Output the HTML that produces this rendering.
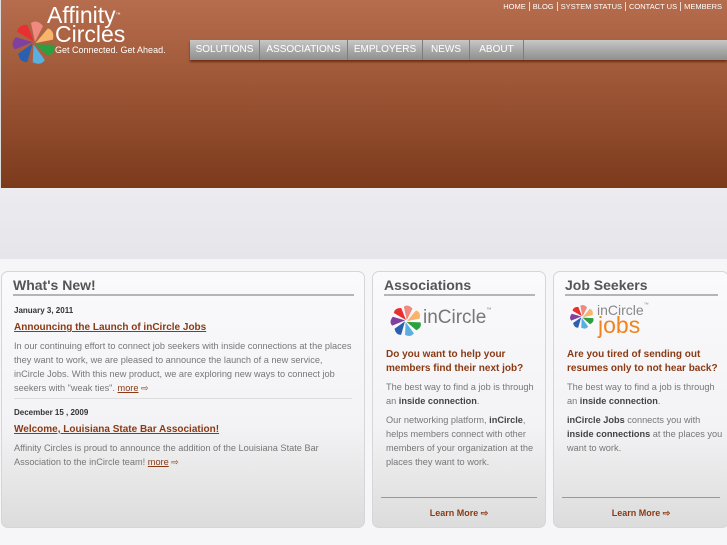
<!DOCTYPE html>
<html><head><style>
*{margin:0;padding:0;box-sizing:border-box}
body{width:727px;height:545px;overflow:hidden;background:#f6f6f8;font-family:"Liberation Sans",sans-serif;position:relative}
#hdr{position:absolute;left:0;top:0;width:727px;height:188px;background:linear-gradient(#b66d4d,#9a5434 50%,#7c3a1c);border-left:1px solid #ddd}
#band{position:absolute;left:0;top:188px;width:727px;height:71px;background:linear-gradient(#ececf0,#e6e6ea)}
.top{position:absolute;right:2px;top:2px;font-size:7.5px;color:#fff}
.top span{padding:0 3px;border-left:1px solid #f0d8cc}
.top span:first-child{border:none}
#nav{position:absolute;left:190px;top:40px;width:537px;height:20px;background:linear-gradient(#c8c8c6,#a9aaa8 50%,#8f908e);box-shadow:0 2px 2px #6e2f15}
#nav div{float:left;height:20px;line-height:20px;color:#fff;font-size:10px;text-align:center;border-right:1px solid #7d7e7c}
.brand{position:absolute;color:#fff}
.panel{position:absolute;top:271px;height:257px;border:1px solid #d6d6da;border-radius:7px;background:linear-gradient(#fafafc 0%,#f3f3f5 60%,#dcdcdc 100%)}
.panel h2{font-size:14px;color:#555;font-weight:bold;border-bottom:2px solid #b5b5b5;padding-bottom:1px;margin:5px 10px 0 11px}
.date{font-size:8px;font-weight:bold;color:#333;margin:10px 0 0 12px}
.ttl{font-size:10px;font-weight:bold;color:#8a3a14;text-decoration:underline;margin:7px 0 0 12px}
.txt{font-size:9.2px;color:#777;line-height:14px;margin:6px 10px 0 12px}
.txt a{color:#8a3a14;text-decoration:underline}
.q{font-size:10px;font-weight:bold;color:#8a3a14;line-height:14px;margin:6px 0 0 13px}
.txt b{color:#444}
.lm{position:absolute;bottom:8px;left:0;right:0;text-align:center;font-size:9px;font-weight:bold;color:#8a3a14}
.hr{position:absolute;left:8px;right:8px;bottom:29px;border-top:1px solid #999}
</style></head><body>
<svg width="0" height="0" style="position:absolute"><defs>
<path id="p" d="M1,-1 L-3,-20 Q3,-24 9,-17 Z"/>
<g id="pw">
<use href="#p" fill="#f08a80" transform="rotate(0)"/>
<use href="#p" fill="#f7b46a" transform="rotate(52)"/>
<use href="#p" fill="#2aa040" transform="rotate(104)"/>
<use href="#p" fill="#5aaee0" transform="rotate(156)"/>
<use href="#p" fill="#2b5fb0" transform="rotate(208)"/>
<use href="#p" fill="#8040a0" transform="rotate(260)"/>
<use href="#p" fill="#e83030" transform="rotate(312)"/>
</g></defs></svg>
<div id="hdr"></div>
<div id="band"></div>
<svg style="position:absolute;left:9px;top:18px" width="50" height="50" viewBox="-25 -25 50 50"><use href="#pw"/></svg>
<div class="brand" style="left:47px;top:4px;font-size:23px;line-height:22px">Affinity<sup style="font-size:5px;vertical-align:top">™</sup></div>
<div class="brand" style="left:55px;top:23px;font-size:23px;line-height:22px">Circles</div>
<div class="brand" style="left:55px;top:45px;font-size:9px">Get Connected. Get Ahead.</div>
<div class="top"><span>HOME</span><span>BLOG</span><span>SYSTEM STATUS</span><span>CONTACT US</span><span>MEMBERS</span></div>
<div id="nav"><div style="width:70px">SOLUTIONS</div><div style="width:88px">ASSOCIATIONS</div><div style="width:75px">EMPLOYERS</div><div style="width:47px">NEWS</div><div style="width:54px">ABOUT</div></div>

<div class="panel" style="left:1px;width:364px">
<h2>What's New!</h2>
<div class="date">January 3, 2011</div>
<div class="ttl">Announcing the Launch of inCircle Jobs</div>
<div class="txt">In our continuing effort to connect job seekers with inside connections at the places they want to work, we are pleased to announce the launch of a new service, inCircle Jobs. With this new product, we are exploring new ways to connect job seekers with "weak ties". <a>more</a> <span style="color:#8a3a14">⇨</span></div>
<div style="border-top:1px solid #ddd;margin:3px 12px 0"></div>
<div class="date" style="margin-top:9px">December 15 , 2009</div>
<div class="ttl">Welcome, Louisiana State Bar Association!</div>
<div class="txt">Affinity Circles is proud to announce the addition of the Louisiana State Bar Association to the inCircle team! <a>more</a> <span style="color:#8a3a14">⇨</span></div>
</div>

<div class="panel" style="left:372px;width:174px">
<h2>Associations</h2>
<div style="height:46px;position:relative">
<svg style="position:absolute;left:15px;top:7px" width="36" height="36" viewBox="-25 -25 50 50"><use href="#pw"/></svg>
<div style="position:absolute;left:50px;top:11px;font-size:19px;color:#777">inCircle<sup style="font-size:5px;vertical-align:top">™</sup></div></div>
<div class="q" style="margin-top:6px">Do you want to help your members find their next job?</div>
<div class="txt" style="margin:4px 8px 0 13px">The best way to find a job is through an <b>inside connection</b>.</div>
<div class="txt" style="margin:5px 8px 0 13px">Our networking platform, <b>inCircle</b>, helps members connect with other members of your organization at the places they want to work.</div>
<div class="hr"></div><div class="lm">Learn More ⇨</div>
</div>

<div class="panel" style="left:553px;width:176px">
<h2>Job Seekers</h2>
<div style="height:46px;position:relative">
<svg style="position:absolute;left:14px;top:7px" width="28" height="28" viewBox="-25 -25 50 50"><use href="#pw"/></svg>
<div style="position:absolute;left:43px;top:6px;font-size:14px;color:#888">inCircle<sup style="font-size:5px;vertical-align:top">™</sup></div>
<div style="position:absolute;left:44px;top:16px;font-size:23px;color:#f0841e">jobs</div></div>
<div class="q" style="margin-top:6px">Are you tired of sending out resumes only to not hear back?</div>
<div class="txt" style="margin:4px 4px 0 13px">The best way to find a job is through an <b>inside connection</b>.</div>
<div class="txt" style="margin:5px 4px 0 13px"><b>inCircle Jobs</b> connects you with <b>inside connections</b> at the places you want to work.</div>
<div class="hr"></div><div class="lm">Learn More ⇨</div>
</div>
</body></html>
